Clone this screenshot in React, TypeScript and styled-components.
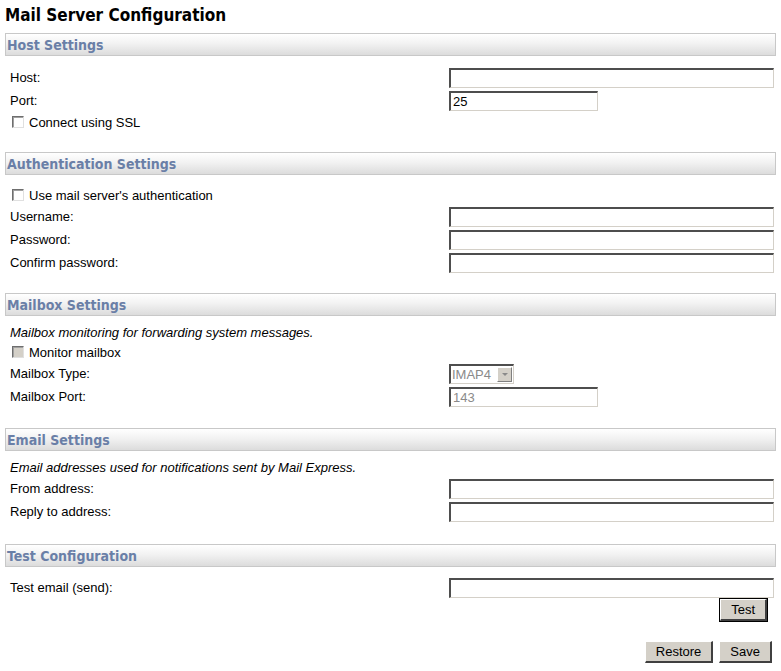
import React from "react";
import styled, { createGlobalStyle } from "styled-components";

const Global = createGlobalStyle`
  html, body { margin: 0; padding: 0; background: #fff; }
  body { font-family: "Liberation Sans", Arial, sans-serif; font-size: 13px; color: #000; }
`;

const Page = styled.div`
  padding: 0 5px;
  width: 781px;
  box-sizing: border-box;
`;

const Title = styled.h1`
  margin: 0;
  padding-top: 4px;
  height: 33px;
  box-sizing: border-box;
  font-family: "DejaVu Sans Condensed", "DejaVu Sans", sans-serif;
  font-weight: bold;
  font-size: 17px;
  line-height: 22px;
  color: #000;
`;

const Section = styled.section<{ $gap: number }>`
  margin-bottom: ${(p) => p.$gap}px;
`;

const Header = styled.div`
  height: 21px;
  border: 1px solid #c8c8c8;
  background: linear-gradient(to bottom, #ffffff 0%, #f2f2f2 45%, #dcdcdc 100%);
  display: flex;
  align-items: center;
  padding-left: 1px;
  font-family: "DejaVu Sans Condensed", "DejaVu Sans", sans-serif;
  font-weight: bold;
  font-size: 14px;
  color: #6a7fa7;
`;

const Body = styled.div<{ $top: number }>`
  padding: ${(p) => p.$top}px 2px 0 5px;
  display: flex;
  flex-direction: column;
`;

const Row = styled.div`
  display: grid;
  grid-template-columns: 1fr 325px;
  height: 23px;
  align-items: center;
`;

const TextRow = styled.div`
  height: 20px;
  display: flex;
  align-items: center;
`;

const Note = styled(TextRow)`
  font-style: italic;
`;

const Label = styled.span``;

const Input = styled.input<{ $w?: number }>`
  box-sizing: border-box;
  width: ${(p) => (p.$w ? `${p.$w}px` : "100%")};
  height: 20px;
  margin: 0;
  padding: 0 2px;
  border-style: solid;
  border-width: 2px 1px 1px 2px;
  border-color: #4e4e4e #d4d0c8 #d4d0c8 #4e4e4e;
  background: #fff;
  font-family: "Liberation Sans", Arial, sans-serif;
  font-size: 13px;
  color: #000;
  outline: none;
  &:disabled { color: #8a8a8a; background: #fff; }
`;

const Check = styled.span<{ $disabled?: boolean }>`
  box-sizing: border-box;
  width: 12px;
  height: 12px;
  margin: 0 5px 0 2px;
  border-style: solid;
  border-width: 1px;
  border-color: #6e6e6e #e0e0e0 #e0e0e0 #6e6e6e;
  box-shadow: inset 1px 1px 0 #a0a0a0;
  background: ${(p) => (p.$disabled ? "#d4d0c8" : "#fff")};
  display: inline-block;
`;

const Select = styled.div`
  box-sizing: border-box;
  width: 65px;
  height: 20px;
  display: flex;
  align-items: center;
  border-style: solid;
  border-width: 2px 1px 1px 2px;
  border-color: #4e4e4e #d4d0c8 #d4d0c8 #4e4e4e;
  color: #8a8a8a;
  padding-left: 1px;
  font-size: 13px;
`;

const SelectText = styled.span`
  flex: 1;
`;

const SelectArrow = styled.span`
  width: 15px;
  height: 15px;
  margin-right: 1px;
  box-sizing: border-box;
  background: #d4d0c8;
  border: 1px solid;
  border-color: #fff #808080 #808080 #fff;
  display: flex;
  align-items: center;
  justify-content: center;
  &::after {
    content: "";
    border-left: 3px solid transparent;
    border-right: 3px solid transparent;
    border-top: 3px solid #8a8a8a;
  }
`;

const ButtonBar = styled.div<{ $right: number; $top: number }>`
  display: flex;
  justify-content: flex-end;
  gap: 6px;
  padding: ${(p) => p.$top}px ${(p) => p.$right}px 0 0;
`;

const Button = styled.button<{ $default?: boolean }>`
  box-sizing: border-box;
  height: 22px;
  padding: 0 10px;
  margin: 0;
  background: #d4d0c8;
  font-family: "Liberation Sans", Arial, sans-serif;
  font-size: 13px;
  color: #000;
  border-style: solid;
  border-width: 1px 2px 2px 1px;
  border-color: #fff #404040 #404040 #fff;
  ${(p) => p.$default && `outline: 1px solid #000; outline-offset: 0;`}
`;

const FieldRow: React.FC<{ label: string; value?: string; w?: number; disabled?: boolean }> = ({ label, value = "", w, disabled }) => (
  <Row>
    <Label>{label}</Label>
    <div>
      <Input $w={w} defaultValue={value} disabled={disabled} />
    </div>
  </Row>
);

const CheckRow: React.FC<{ label: string; disabled?: boolean }> = ({ label, disabled }) => (
  <TextRow>
    <Check $disabled={disabled} />
    <span>{label}</span>
  </TextRow>
);

export default function App() {
  return (
    <>
      <Global />
      <Page>
        <Title>Mail Server Configuration</Title>

        <Section $gap={20}>
          <Header>Host Settings</Header>
          <Body $top={10}>
            <FieldRow label="Host:" />
            <FieldRow label="Port:" value="25" w={149} />
            <CheckRow label="Connect using SSL" />
          </Body>
        </Section>

        <Section $gap={19}>
          <Header>Authentication Settings</Header>
          <Body $top={10}>
            <CheckRow label="Use mail server's authentication" />
            <FieldRow label="Username:" />
            <FieldRow label="Password:" />
            <FieldRow label="Confirm password:" />
          </Body>
        </Section>

        <Section $gap={20}>
          <Header>Mailbox Settings</Header>
          <Body $top={6}>
            <Note>Mailbox monitoring for forwarding system messages.</Note>
            <CheckRow label="Monitor mailbox" disabled />
            <Row>
              <Label>Mailbox Type:</Label>
              <div>
                <Select>
                  <SelectText>IMAP4</SelectText>
                  <SelectArrow />
                </Select>
              </div>
            </Row>
            <FieldRow label="Mailbox Port:" value="143" w={149} disabled />
          </Body>
        </Section>

        <Section $gap={21}>
          <Header>Email Settings</Header>
          <Body $top={6}>
            <Note>Email addresses used for notifications sent by Mail Express.</Note>
            <FieldRow label="From address:" />
            <FieldRow label="Reply to address:" />
          </Body>
        </Section>

        <Section $gap={0}>
          <Header>Test Configuration</Header>
          <Body $top={9}>
            <FieldRow label="Test email (send):" />
          </Body>
          <ButtonBar $right={9} $top={0}>
            <Button $default>Test</Button>
          </ButtonBar>
          <ButtonBar $right={4} $top={20}>
            <Button>Restore</Button>
            <Button>Save</Button>
          </ButtonBar>
        </Section>
      </Page>
    </>
  );
}
